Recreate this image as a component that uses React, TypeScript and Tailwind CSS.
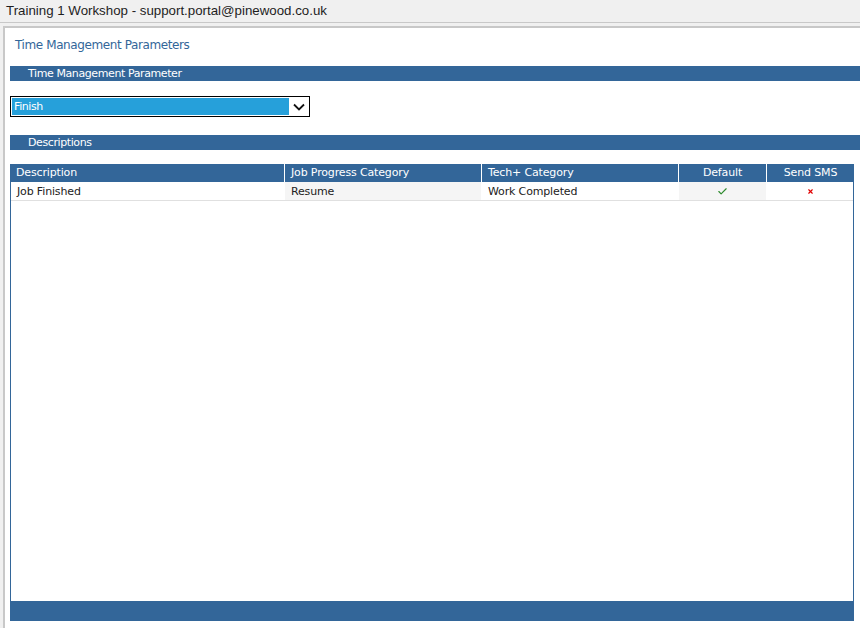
import { Check, X } from "lucide-react"

const cols = [
    { label: "Description", w: "w-[274px]", align: "text-left" },
    { label: "Job Progress Category", w: "w-[197px]", align: "text-left" },
    { label: "Tech+ Category", w: "w-[197px]", align: "text-left" },
    { label: "Default", w: "w-[88px]", align: "text-center" },
    { label: "Send SMS", w: "flex-1", align: "text-center" },
]

export default function App() {
    return (
        <div className="w-[860px] h-[628px] overflow-hidden bg-[#f0f0f0] font-['Liberation_Sans',sans-serif]">
            {/* Window title */}
            <div className="h-[23px] border-b border-[#c8c8c8] pl-[6px] text-[13.3px] leading-[21px] text-[#1e1e1e]">
                Training 1 Workshop - support.portal@pinewood.co.uk
            </div>

            {/* Panel */}
            <div className="mt-[3px] ml-[3px] h-[602px] bg-white border-l-2 border-t-2 border-[#c8c8c8] font-['DejaVu_Sans',sans-serif] tracking-[-0.4px]">
                <div className="pl-[10px] pt-[8px] h-[38px] text-[12px] text-[#336699]">Time Management Parameters</div>

                <div className="ml-[5px] h-[15px] bg-[#336699] pl-[18px] text-[11px] leading-[15px] text-white">Time Management Parameter</div>

                <div className="ml-[5px] mt-[15px] w-[300px] h-[21px] border border-black flex items-center p-[1px]">
                    <div className="flex-1 h-[17px] bg-[#26a0da] text-white text-[11px] leading-[17px] pl-[2px]">Finish</div>
                    <div className="w-[19px] flex justify-center">
                        <svg width="12" height="8" viewBox="0 0 12 8">
                            <path d="M1 1.5 L6 6.5 L11 1.5" fill="none" stroke="#111" strokeWidth="1.8" />
                        </svg>
                    </div>
                </div>

                <div className="ml-[5px] mt-[18px] h-[15px] bg-[#336699] pl-[18px] text-[11px] leading-[15px] text-white">Descriptions</div>

                {/* Grid */}
                <div className="ml-[5px] mt-[14px] w-[844px] h-[457px] flex flex-col text-[11px] tracking-[-0.15px]">
                    <div className="flex h-[18px] bg-[#336699] text-white leading-[18px]">
                        {cols.map((c, i) => (
                            <div key={c.label} className={`${c.w} ${c.align} ${i > 0 ? "border-l border-white" : ""} px-[6px]`}>{c.label}</div>
                        ))}
                    </div>
                    <div className="flex-1 border-l border-r border-[#336699] flex flex-col">
                        <div className="flex h-[19px] border-b border-[#e0e0e0] leading-[19px] text-[#222]">
                            <div className="w-[273px] px-[6px] bg-white">Job Finished</div>
                            <div className="w-[197px] border-l border-white px-[6px] bg-[#f5f5f5]">Resume</div>
                            <div className="w-[197px] border-l border-white px-[6px] bg-white">Work Completed</div>
                            <div className="w-[88px] border-l border-white bg-[#f5f5f5] flex items-center justify-center">
                                <Check size={11} strokeWidth={2.5} className="text-[#2e8b2e]" />
                            </div>
                            <div className="flex-1 border-l border-white bg-white flex items-center justify-center">
                                <X size={7} strokeWidth={4} className="text-[#e00000]" />
                            </div>
                        </div>
                    </div>
                    <div className="h-[20px] bg-[#336699]" />
                </div>
            </div>
        </div>
    )
}
